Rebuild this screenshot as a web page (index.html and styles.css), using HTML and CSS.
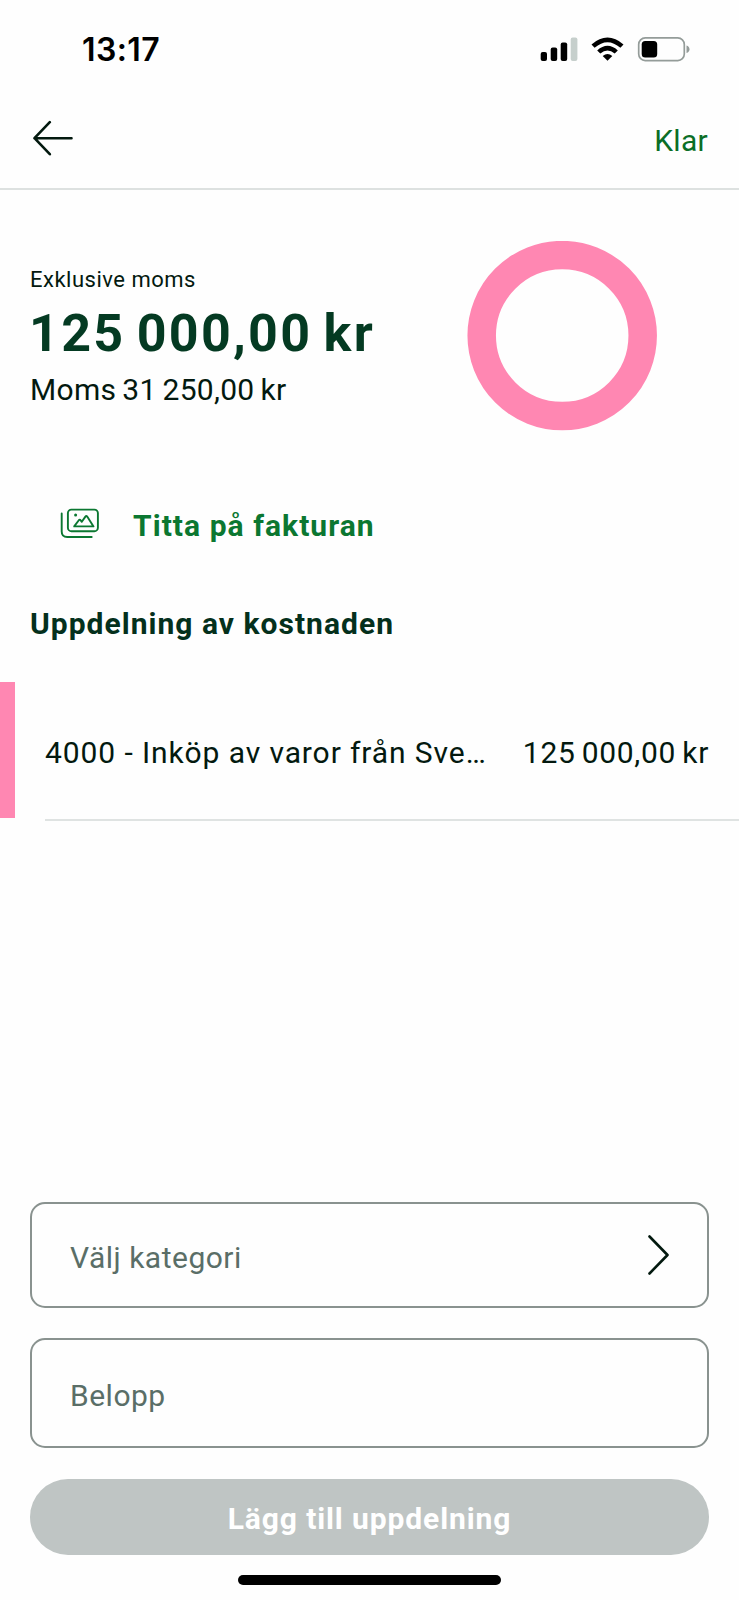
FILE: index.html
```html
<!DOCTYPE html>
<html lang="sv">
<head>
<meta charset="utf-8">
<title>Uppdelning av kostnaden</title>
<link rel="stylesheet" href="styles.css">
</head>
<body>
<div class="screen">
  <div class="status">
    <span class="time">13:17</span>
    <svg class="status-icons" width="150" height="26" viewBox="0 0 150 26">
      <rect x="0.700" y="15" width="6.300" height="9" rx="2"/>
      <rect x="10.700" y="10.500" width="6.500" height="13.500" rx="2"/>
      <rect x="20.700" y="5.500" width="6.500" height="18.500" rx="2"/>
      <rect x="30.700" y="0.500" width="6.700" height="23.500" rx="2" fill="#c6cfcc"/>
      <path d="M51.500 7.500 Q67.500 -6.300 83.500 7.500 L80.400 10.800 Q67.500 -0.500 54.600 10.800 Z"/>
      <path d="M57.200 13.400 Q67.500 4.300 77.800 13.400 L74.700 16.600 Q67.500 10.400 60.300 16.600 Z"/>
      <path d="M62.700 18.900 Q67.500 15.200 72.300 18.900 L67.500 23.800 Z"/>
      <rect x="98.700" y="0.900" width="45.600" height="22.700" rx="6.500" fill="none" stroke="#949c99" stroke-width="1.700"/>
      <rect x="101.700" y="4" width="15.500" height="16.500" rx="3.500"/>
      <path d="M146.500 8.500 Q149.500 9.500 149.500 12.200 Q149.500 15 146.500 16 Z" fill="#949c99"/>
    </svg>
  </div>
  <header class="topbar">
    <svg class="back" width="42" height="36" viewBox="0 0 42 36"><path d="M18.800 2.200 L3.500 18.200 L18.800 34.200 M3.500 18.200 H40.500"/></svg>
    <a class="done">Klar</a>
  </header>
  <section class="summary">
    <div class="totals">
      <div class="label">Exklusive moms</div>
      <div class="amount">125 000,00 kr</div>
      <div class="vat">Moms 31 250,00 kr</div>
    </div>
    <svg class="ring" width="190" height="190" viewBox="0 0 190 190"><circle cx="95.200" cy="94.600" r="80.500"/></svg>
  </section>
  <a class="invoice">
    <svg width="40" height="32" viewBox="0 0 40 32">
      <rect x="7.900" y="1.600" width="30" height="21.600" rx="3.500"/>
      <path d="M1.700 5.400 V23.500 Q1.700 29 7.200 29 H31.700"/>
      <path d="M14.200 18.400 L19 12 Q19.800 11.200 20.500 12.200 L21.800 13.800 L25.400 8.600 Q26.300 7.400 27.200 8.600 L33.500 18.400 Z"/>
      <circle class="dot" cx="15.600" cy="7.100" r="1.500"/>
    </svg>
    <span>Titta på fakturan</span>
  </a>
  <h2 class="heading">Uppdelning av kostnaden</h2>
  <div class="row">
    <div class="swatch"></div>
    <div class="row-body">
      <span class="account">4000 - Inköp av varor från Sve…</span>
      <span class="sum">125 000,00 kr</span>
    </div>
  </div>
  <div class="form">
    <div class="field category"><span>Välj kategori</span>
      <svg width="22" height="42" viewBox="0 0 22 42"><path d="M2.500 2.500 L20.500 21 L2.500 39.500"/></svg>
    </div>
    <div class="field value"><span>Belopp</span></div>
    <button class="submit">Lägg till uppdelning</button>
  </div>
  <div class="home"></div>
</div>
</body>
</html>
```
FILE: styles.css
```css
* { box-sizing: border-box; }
body { margin: 0; background: #fefefe; font-family: Roboto, "Liberation Sans", sans-serif; font-size: 30px; font-weight: 400; line-height: 40px; color: #03190f; }
.screen { width: 739px; height: 1600px; display: flex; flex-direction: column; overflow: hidden; white-space: nowrap; }
.status { height: 98px; flex: none; display: flex; align-items: center; justify-content: space-between; padding: 2px 49px 0 82px; color: #000; }
.status-icons { margin-top: -1px; }
.time { font-family: Inter, sans-serif; font-weight: 600; font-size: 32px; letter-spacing: 0.4px; }
.topbar { height: 92px; flex: none; display: flex; align-items: center; justify-content: space-between; border-bottom: 2px solid #dde1e0; padding: 0 31px; }
.back, .category svg { fill: none; stroke: #03190f; stroke-width: 2.6; stroke-linecap: round; stroke-linejoin: round; }
.back { margin-top: -11px; }
.done { color: #0b6e26; margin-top: -4px; letter-spacing: 0.3px; }
.summary { height: 316px; flex: none; display: flex; justify-content: space-between; padding: 51px 82px 0 30px; }
.totals { padding-top: 24px; }
.label { font-size: 22px; line-height: 30px; letter-spacing: 0.5px; }
.amount { font-size: 52px; line-height: 60px; font-weight: 700; color: #043a22; margin: 9px 0 6px -1px; letter-spacing: 2.300px; word-spacing: -4px; }
.vat { letter-spacing: 0.3px; word-spacing: -1.8px; }
.ring { fill: none; stroke: #ff87b2; stroke-width: 28.500px; }
.invoice { flex: none; display: flex; gap: 33px; padding-left: 60px; font-weight: 700; color: #0b7731; height: 98px; letter-spacing: 1.05px; }
.invoice svg { margin-top: 2px; fill: none; stroke: #0b7731; stroke-width: 1.9; stroke-linejoin: round; stroke-linecap: round; }
.invoice .dot { fill: #0b7731; stroke: none; }
.heading { margin: 0; flex: none; height: 78px; padding-left: 30px; font-size: 30px; line-height: 40px; font-weight: 700; color: #04301c; letter-spacing: 1.02px; }
.row { flex: none; height: 139px; display: flex; gap: 30px; }
.swatch { width: 15px; height: 136px; background: #ff87b2; }
.row-body { flex: 1; height: 139px; display: flex; align-items: center; justify-content: space-between; border-bottom: 2px solid #dfe3e2; padding: 4px 30px 0 0; }
.account { letter-spacing: 0.9px; }
.sum { letter-spacing: 0.7px; word-spacing: -2px; }
.form { margin-top: auto; flex: none; display: flex; flex-direction: column; padding: 0 30px; }
.field { border: 2px solid #89928f; border-radius: 15px; display: flex; align-items: center; justify-content: space-between; padding: 5px 38px 0 38px; color: #5a6e67; letter-spacing: 0.5px; }
.category { height: 106px; margin-bottom: 30px; }
.category svg { margin-top: -5px; }
.value { height: 110px; margin-bottom: 31px; }
.submit { height: 76px; border: 0; border-radius: 38px; background: #bfc5c4; color: #fff; font: 700 30px/40px Roboto, "Liberation Sans", sans-serif; padding: 3px 0 0; letter-spacing: 0.9px; }
.home { flex: none; align-self: center; width: 263px; height: 10px; border-radius: 5px; background: #000; margin: 20px 0 15px; }
```
